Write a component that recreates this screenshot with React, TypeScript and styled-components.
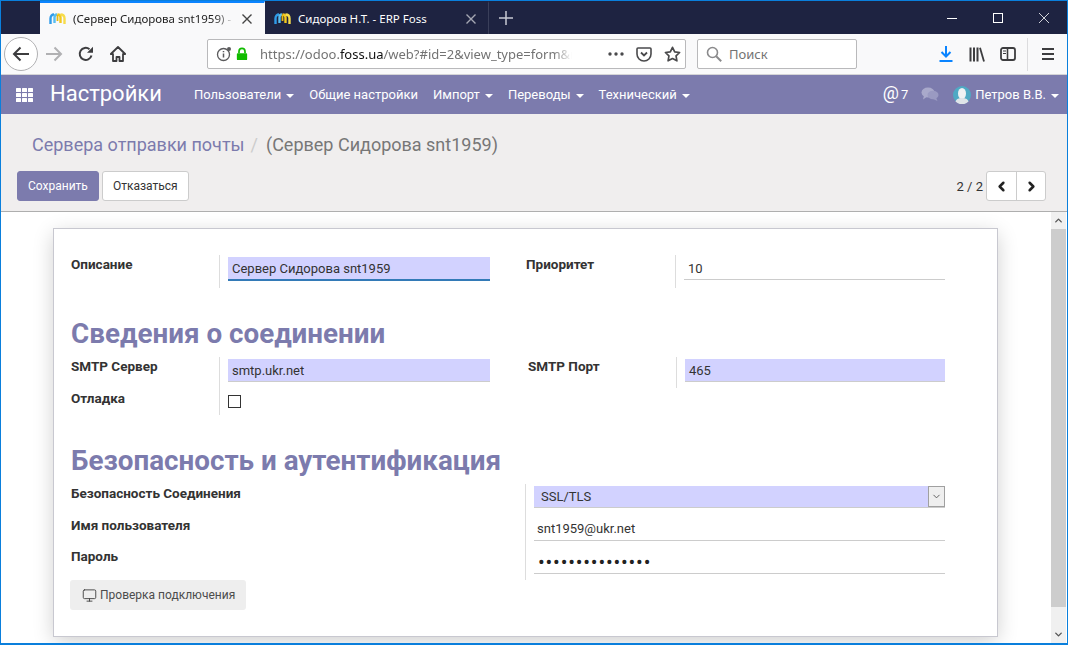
import * as React from 'react';
import styled, { createGlobalStyle } from 'styled-components';
import { ChevronDown, ChevronLeft, ChevronRight, ChevronUp, Monitor } from 'lucide-react';

const GlobalStyle = createGlobalStyle`
  html, body {
    margin: 0;
    height: 100%;
    overflow: hidden;
    background: #fff;
  }
  * {
    box-sizing: border-box;
  }
`;

const purple = '#7c7bad';
const uiFont = `"Noto Sans", "Open Sans", sans-serif`;
const odooFont = `Roboto, "Liberation Sans", sans-serif`;

const Window = styled.div`
  width: 1068px;
  height: 645px;
  display: flex;
  flex-direction: column;
  border: solid #0a7fdc;
  border-width: 1px 1px 2px 1px;
  overflow: hidden;
  font-family: ${odooFont};
`;

const TitleBar = styled.div`
  height: 33px;
  flex: none;
  display: flex;
  background: #1e2341;
  padding-left: 39px;
`;

const Tab = styled.div<{ $active?: boolean }>`
  width: ${(p) => (p.$active ? 225 : 224)}px;
  display: flex;
  align-items: center;
  gap: 7px;
  padding: 0 9px 0 9px;
  font: 11.5px ${uiFont};
  white-space: nowrap;
  overflow: hidden;
  color: ${(p) => (p.$active ? '#222' : '#fff')};
  background: ${(p) => (p.$active ? '#f9f9fa' : 'transparent')};
  border-top: 2px solid ${(p) => (p.$active ? '#0a84ff' : 'transparent')};
  border-right: 1px solid ${(p) => (p.$active ? 'transparent' : '#3a3f5a')};
`;

const TabTitle = styled.span<{ $active?: boolean }>`
  flex: 1;
  overflow: hidden;
  ${(p) =>
    p.$active &&
    `-webkit-mask-image: linear-gradient(90deg, #000 88%, transparent 100%);
     mask-image: linear-gradient(90deg, #000 88%, transparent 100%);`}
`;

const TabClose = styled.svg`
  width: 10px;
  height: 10px;
  flex: none;
  margin-right: 3px;
`;

const NewTab = styled.div`
  width: 34px;
  display: flex;
  align-items: center;
  justify-content: center;
`;

const WindowButtons = styled.div`
  margin-left: auto;
  display: flex;
`;

const WindowButton = styled.div`
  width: 46px;
  display: flex;
  align-items: center;
  justify-content: center;
`;

const Toolbar = styled.div`
  height: 41px;
  flex: none;
  display: flex;
  align-items: center;
  background: #f9f9fa;
  border-bottom: 1px solid #d4d4d6;
  padding-left: 3px;
`;

const BackButton = styled.div`
  width: 34px;
  height: 34px;
  flex: none;
  border-radius: 50%;
  border: 1px solid #b1b1b3;
  background: #fff;
  display: flex;
  align-items: center;
  justify-content: center;
`;

const ToolIcon = styled.div<{ $w?: number }>`
  width: ${(p) => p.$w ?? 32}px;
  height: 32px;
  flex: none;
  display: flex;
  align-items: center;
  justify-content: center;
`;

const Field = styled.div`
  height: 30px;
  flex: none;
  display: flex;
  align-items: center;
  background: #fff;
  border: 1px solid #b9b9bb;
  border-radius: 2px;
`;

const UrlBar = styled(Field)`
  width: 479px;
  margin-left: 73px;
  padding-left: 8px;
`;

const UrlText = styled.div`
  width: 312px;
  margin-left: 12px;
  font: 13px/28px ${uiFont};
  color: #737373;
  white-space: nowrap;
  overflow: hidden;
  -webkit-mask-image: linear-gradient(90deg, #000 94%, transparent 100%);
  mask-image: linear-gradient(90deg, #000 94%, transparent 100%);

  b {
    font-weight: 400;
    color: #111;
  }
`;

const UrlActions = styled.div`
  margin-left: auto;
  margin-right: -1px;
  display: flex;
`;

const SearchBar = styled(Field)`
  width: 160px;
  margin-left: 11px;
  padding-left: 8px;
  gap: 7px;
  font: 13px ${uiFont};
  color: #737373;
`;

const ToolbarEnd = styled.div`
  margin-left: auto;
  display: flex;
  align-items: center;
  padding-right: 3px;
`;

const ToolDivider = styled.div`
  width: 1px;
  height: 33px;
  background: #dcdcde;
  margin: 0 4px 0 3px;
`;

const NavBar = styled.div`
  height: 39px;
  flex: none;
  display: flex;
  align-items: center;
  background: ${purple};
  color: #fff;
  padding-left: 15px;
  font-size: 13px;
`;

const AppTitle = styled.div`
  font-size: 22px;
  margin: -3px 32px 0 16px;
`;

const MenuItem = styled.div`
  display: flex;
  align-items: center;
  gap: 5px;
  margin-right: 15px;
  white-space: nowrap;
`;

const Caret = styled.span`
  width: 0;
  height: 0;
  border-left: 4px solid transparent;
  border-right: 4px solid transparent;
  border-top: 4px solid #fff;
  margin-top: 2px;
`;

const NavRight = styled.div`
  margin-left: auto;
  display: flex;
  align-items: center;
  padding-right: 8px;
`;

const AtSign = styled.span`
  font-size: 18px;
  margin: -4px 2px 0 0;
`;

const ChatIcon = styled.svg`
  width: 18px;
  height: 15px;
  margin: 0 14px 0 13px;
`;

const Avatar = styled.svg`
  width: 18px;
  height: 18px;
  margin-right: 4px;
`;

const ControlPanel = styled.div`
  height: 98px;
  flex: none;
  background: #f0eeee;
  border-bottom: 1px solid #aeaeae;
  padding: 19px 21px 0 16px;
`;

const Breadcrumb = styled.div`
  font-size: 18px;
  line-height: 24px;
  padding-left: 15px;
  color: #777;
  white-space: nowrap;
`;

const BreadLink = styled.span`
  color: ${purple};
`;

const BreadSep = styled.span`
  color: #ccc;
  margin: 0 8px 0 6px;
`;

const PanelRow = styled.div`
  display: flex;
  align-items: center;
  margin-top: 14px;
`;

const ActionButton = styled.div<{ $primary?: boolean }>`
  height: 30px;
  display: flex;
  align-items: center;
  padding: 0 10px;
  margin-right: 3px;
  font-size: 12px;
  border-radius: 3px;
  border: 1px solid ${(p) => (p.$primary ? purple : '#ccc')};
  background: ${(p) => (p.$primary ? purple : '#fff')};
  color: ${(p) => (p.$primary ? '#fff' : '#333')};
`;

const Pager = styled.div`
  margin-left: auto;
  display: flex;
  align-items: center;
  font-size: 13px;
  color: #333;
`;

const PagerButtons = styled.div`
  display: flex;
  margin-left: 3px;
  height: 30px;
  background: #fff;
  border: 1px solid #ccc;
  border-radius: 3px;
`;

const PagerButton = styled.div`
  width: 29px;
  display: flex;
  align-items: center;
  justify-content: center;
  & + & {
    border-left: 1px solid #ccc;
  }
`;

const Body = styled.div`
  flex: 1;
  min-height: 0;
  display: flex;
  background: #fff;
`;

const Main = styled.div`
  flex: 1;
  padding: 16px 0 0 52px;
  min-width: 0;
`;

const Scrollbar = styled.div`
  width: 15px;
  flex: none;
  display: flex;
  flex-direction: column;
  background: #f0f0f0;
  margin-right: 1px;
`;

const ScrollArrow = styled.div`
  height: 17px;
  display: flex;
  align-items: center;
  justify-content: center;
`;

const ScrollThumb = styled.div`
  flex: 1;
  background: #cdcdcd;
  margin-bottom: 19px;
`;

const Sheet = styled.div`
  width: 945px;
  height: 409px;
  background: #fff;
  border: 1px solid #c8c8d0;
  box-shadow: 0 5px 20px -1px rgba(0, 0, 0, 0.2);
  padding: 26px 0 0 17px;
  color: #4c4c4c;
  font-size: 13px;
`;

const Columns = styled.div`
  display: grid;
  grid-template-columns: 419px 419px;
  column-gap: 36px;
`;

const FieldGrid = styled.div<{ $label?: number }>`
  display: grid;
  grid-template-columns: ${(p) => p.$label ?? 148}px 1fr;
`;

const Label = styled.div<{ $offset?: number; $indent?: number }>`
  font-weight: 700;
  color: #333;
  font-size: 13.5px;
  line-height: 18px;
  padding-top: ${(p) => p.$offset ?? 0}px;
  padding-left: ${(p) => p.$indent ?? 0}px;
  white-space: nowrap;
`;

const Cell = styled.div<{ $h?: number }>`
  border-left: 1px solid #ddd;
  padding-left: 8px;
  ${(p) => (p.$h ? `height: ${p.$h}px;` : '')}
`;

const Input = styled.div<{ $required?: boolean; $focus?: boolean }>`
  height: ${(p) => (p.$focus ? 24 : 23)}px;
  line-height: 21px;
  padding: 1px 0 0 4px;
  margin-top: 2px;
  color: #333;
  background: ${(p) => (p.$required ? '#d2d2ff' : 'transparent')};
  border-bottom: ${(p) => (p.$focus ? '2px solid #337ab7' : '1px solid #ccc')};
`;

const SectionTitle = styled.div<{ $top: number }>`
  margin-top: ${(p) => p.$top}px;
  height: 29px;
  font-size: 27.8px;
  line-height: 29px;
  font-weight: 700;
  color: ${purple};
  white-space: nowrap;
`;

const SectionFields = styled.div<{ $top: number }>`
  margin-top: ${(p) => p.$top}px;
`;

const CheckBox = styled.div`
  width: 13px;
  height: 13px;
  margin-top: 7px;
  border: 1px solid #333;
  background: #fff;
`;

const SecurityGrid = styled.div`
  display: grid;
  grid-template-columns: 454px 420px;
`;

const SecurityLabels = styled.div`
  display: grid;
  grid-auto-rows: 31.5px;
`;

const SecurityCell = styled(Cell)`
  height: 96px;
  padding-top: 2px;
`;

const Select = styled.div`
  height: 22px;
  display: flex;
  align-items: center;
  padding-left: 7px;
  background: #d2d2ff;
  border-bottom: 1px solid #ccc;
  color: #333;
`;

const SelectArrow = styled.div`
  margin-left: auto;
  width: 17px;
  height: 21px;
  display: flex;
  align-items: center;
  justify-content: center;
  background: #efefef;
  border: 1px solid #a0a0a0;
`;

const UserInput = styled(Input)`
  margin-top: 10px;
  height: 23px;
  padding: 0 0 0 3px;
`;

const PasswordInput = styled(Input)`
  margin-top: 10px;
  height: 23px;
  padding-left: 4px;
  font-size: 20px;
  letter-spacing: 0.8px;
  color: #222;
`;

const TestButton = styled.div`
  width: 176px;
  height: 30px;
  margin-left: -1px;
  display: flex;
  align-items: center;
  gap: 3px;
  padding-left: 12px;
  background: #eee;
  border-radius: 3px;
  color: #4c4c4c;
  font-size: 12px;
  white-space: nowrap;
`;

const FossLogo = () => (
  <svg width="17" height="16" viewBox="0 0 17 16" style={{ flex: 'none' }}>
    <g fill="none" strokeWidth="2.400">
      <path d="M1.500 13V7.500C1.500 5 3 3.500 5 3.500" stroke="#2f9be8" />
      <path d="M5.500 12V6.500C5.500 4.500 6.500 3.500 8 3.500" stroke="#58bdf0" />
      <path d="M8.500 3.500C10.500 3.500 11.500 4.500 11.500 6.500V12" stroke="#f2c81e" />
      <path d="M11.500 3.500C14 3.500 15.500 5 15.500 7.500V13" stroke="#f7dc4a" />
      <path d="M8.500 3.500V10" stroke="#e8b810" strokeWidth="1.800" />
    </g>
  </svg>
);

const CloseGlyph = ({ color }: { color: string }) => (
  <TabClose viewBox="0 0 10 10">
    <path d="M0.500 0.500l9 9M9.500 0.500l-9 9" stroke={color} strokeWidth="1.400" fill="none" />
  </TabClose>
);

export default function App() {
  return (
    <Window>
      <GlobalStyle />
      <TitleBar>
        <Tab $active>
          <FossLogo />
          <TabTitle $active>(Сервер Сидорова snt1959) - ERP Foss</TabTitle>
          <CloseGlyph color="#444" />
        </Tab>
        <Tab>
          <FossLogo />
          <TabTitle>Сидоров Н.Т. - ERP Foss</TabTitle>
          <CloseGlyph color="#a5a7b3" />
        </Tab>
        <NewTab>
          <svg width="14" height="14" viewBox="0 0 14 14">
            <path d="M7 0v14M0 7h14" stroke="#c8c9d2" strokeWidth="1.500" />
          </svg>
        </NewTab>
        <WindowButtons>
          <WindowButton>
            <svg width="10" height="10" viewBox="0 0 10 10">
              <path d="M0 5.500h10" stroke="#fff" />
            </svg>
          </WindowButton>
          <WindowButton>
            <svg width="10" height="10" viewBox="0 0 10 10">
              <rect x="0.500" y="0.500" width="9" height="9" fill="none" stroke="#fff" />
            </svg>
          </WindowButton>
          <WindowButton>
            <svg width="10" height="10" viewBox="0 0 10 10">
              <path d="M0 0l10 10M10 0L0 10" stroke="#fff" strokeWidth="0.800" />
            </svg>
          </WindowButton>
        </WindowButtons>
      </TitleBar>

      <Toolbar>
        <BackButton>
          <svg width="18" height="16" viewBox="0 0 18 16">
            <path d="M17 8H2M8.500 1.500L2 8l6.500 6.500" fill="none" stroke="#3d3d3f" strokeWidth="2" />
          </svg>
        </BackButton>
        <ToolIcon>
          <svg width="18" height="16" viewBox="0 0 18 16">
            <path d="M1 8h15M9.500 1.500L16 8l-6.500 6.500" fill="none" stroke="#b1b1b3" strokeWidth="2" />
          </svg>
        </ToolIcon>
        <ToolIcon>
          <svg width="16" height="16" viewBox="0 0 16 16">
            <path d="M13.500 9.500A6 6 0 1 1 11.500 3.200" fill="none" stroke="#3d3d3f" strokeWidth="2" />
            <path d="M15 0.800v6h-6z" fill="#3d3d3f" />
          </svg>
        </ToolIcon>
        <ToolIcon>
          <svg width="16" height="16" viewBox="0 0 16 16">
            <path d="M8 1L0.800 8h2.200v7h3.500v-4h3v4H13V8h2.200z" fill="none" stroke="#3d3d3f" strokeWidth="1.800" strokeLinejoin="round" />
          </svg>
        </ToolIcon>
        <UrlBar>
          <svg width="16" height="16" viewBox="0 0 16 16">
            <circle cx="7.500" cy="8.500" r="6" fill="none" stroke="#5a5a5c" strokeWidth="1.300" />
            <path d="M7.500 7.500v4M7.500 5v1.300" stroke="#5a5a5c" strokeWidth="1.500" />
            <circle cx="13" cy="3" r="2" fill="#5a5a5c" />
          </svg>
          <svg width="12" height="14" viewBox="0 0 14 16" style={{ marginLeft: 4 }}>
            <path d="M3.500 7V5a3.500 3.500 0 0 1 7 0v2" fill="none" stroke="#12bc00" strokeWidth="2" />
            <rect x="1" y="7" width="12" height="8" rx="1" fill="#12bc00" />
          </svg>
          <UrlText>
            https://odoo.<b>foss.ua</b>/web?#id=2&amp;view_type=form&amp;model=ir
          </UrlText>
          <UrlActions>
            <ToolIcon $w={28}>
              <svg width="16" height="4" viewBox="0 0 16 4">
                <circle cx="2" cy="2" r="1.700" fill="#4a4a4c" />
                <circle cx="8" cy="2" r="1.700" fill="#4a4a4c" />
                <circle cx="14" cy="2" r="1.700" fill="#4a4a4c" />
              </svg>
            </ToolIcon>
            <ToolIcon $w={28}>
              <svg width="16" height="15" viewBox="0 0 16 15">
                <path d="M2 1h12a1 1 0 0 1 1 1v5a7 7 0 0 1-14 0V2a1 1 0 0 1 1-1z" fill="none" stroke="#4a4a4c" strokeWidth="1.600" />
                <path d="M5 5.500l3 3 3-3" fill="none" stroke="#4a4a4c" strokeWidth="1.800" />
              </svg>
            </ToolIcon>
            <ToolIcon $w={28}>
              <svg width="17" height="16" viewBox="0 0 17 16">
                <path d="M8.500 1.300l2.200 4.500 4.900.7-3.550 3.450.85 4.900-4.400-2.300-4.400 2.300.85-4.900L1.400 6.500l4.900-.7z" fill="none" stroke="#4a4a4c" strokeWidth="1.700" strokeLinejoin="round" />
              </svg>
            </ToolIcon>
          </UrlActions>
        </UrlBar>
        <SearchBar>
          <svg width="16" height="16" viewBox="0 0 16 16">
            <circle cx="6.500" cy="6.500" r="5" fill="none" stroke="#8a8a8c" strokeWidth="1.600" />
            <path d="M10.200 10.200l5 5" stroke="#8a8a8c" strokeWidth="2" />
          </svg>
          Поиск
        </SearchBar>
        <ToolbarEnd>
          <ToolIcon>
            <svg width="14" height="16" viewBox="0 0 14 16">
              <path d="M7 0v10M2.500 6L7 10.500 11.500 6" fill="none" stroke="#0a84ff" strokeWidth="2" />
              <path d="M0.500 15h13" stroke="#0a84ff" strokeWidth="2" />
            </svg>
          </ToolIcon>
          <ToolIcon $w={30}>
            <svg width="16" height="15" viewBox="0 0 16 15">
              <path d="M1.500 0.500v14M5 0.500v14M8.500 0.500v14" stroke="#3d3d3f" strokeWidth="2" />
              <path d="M11 0.800l4 13.800" stroke="#3d3d3f" strokeWidth="1.800" />
            </svg>
          </ToolIcon>
          <ToolIcon>
            <svg width="16" height="14" viewBox="0 0 16 14">
              <rect x="1" y="1" width="14" height="12" rx="2" fill="none" stroke="#3d3d3f" strokeWidth="1.800" />
              <path d="M7.500 1v12" stroke="#3d3d3f" strokeWidth="1.600" />
              <path d="M3 4h3M3 6.500h3" stroke="#3d3d3f" />
            </svg>
          </ToolIcon>
          <ToolDivider />
          <ToolIcon>
            <svg width="14" height="12" viewBox="0 0 14 12">
              <path d="M1 1h12M1 6h12M1 11h12" stroke="#3d3d3f" strokeWidth="1.800" />
            </svg>
          </ToolIcon>
        </ToolbarEnd>
      </Toolbar>

      <NavBar>
        <svg width="18" height="14" viewBox="0 0 18 14">
          {[0, 5, 10].map((y) =>
            [0, 6, 12].map((x) => <rect key={`${x}-${y}`} x={x} y={y} width="5" height="4" rx="0.500" fill="#fff" />),
          )}
        </svg>
        <AppTitle>Настройки</AppTitle>
        <MenuItem>
          Пользователи <Caret />
        </MenuItem>
        <MenuItem>Общие настройки</MenuItem>
        <MenuItem>
          Импорт <Caret />
        </MenuItem>
        <MenuItem>
          Переводы <Caret />
        </MenuItem>
        <MenuItem>
          Технический <Caret />
        </MenuItem>
        <NavRight>
          <AtSign>@</AtSign>7
          <ChatIcon viewBox="0 0 18 15">
            <ellipse cx="7" cy="5.500" rx="6.500" ry="5" fill="#a9a9cb" />
            <path d="M3 8.500l-1 4 4.500-3z" fill="#a9a9cb" />
            <ellipse cx="12" cy="8" rx="5.500" ry="4.200" fill="#9a9ac2" />
            <path d="M15 10.500l1.500 3.500-4.500-2z" fill="#9a9ac2" />
          </ChatIcon>
          <Avatar viewBox="0 0 18 18">
            <circle cx="9" cy="9" r="9" fill="#4fa9c4" />
            <ellipse cx="9" cy="7.500" rx="4" ry="5.500" fill="#eef1f3" />
            <path d="M2.500 15.500c1-3 4-3.500 6.500-3.500s5.500.5 6.500 3.500A9 9 0 0 1 2.500 15.500z" fill="#dfe4e8" />
          </Avatar>
          <MenuItem style={{ marginRight: 0 }}>
            Петров В.В. <Caret />
          </MenuItem>
        </NavRight>
      </NavBar>

      <ControlPanel>
        <Breadcrumb>
          <BreadLink>Сервера отправки почты</BreadLink>
          <BreadSep>/</BreadSep>
          (Сервер Сидорова snt1959)
        </Breadcrumb>
        <PanelRow>
          <ActionButton $primary>Сохранить</ActionButton>
          <ActionButton>Отказаться</ActionButton>
          <Pager>
            2 / 2
            <PagerButtons>
              <PagerButton>
                <ChevronLeft size={15} strokeWidth={4} color="#222" />
              </PagerButton>
              <PagerButton>
                <ChevronRight size={15} strokeWidth={4} color="#222" />
              </PagerButton>
            </PagerButtons>
          </Pager>
        </PanelRow>
      </ControlPanel>

      <Body>
        <Main>
          <Sheet>
            <Columns>
              <FieldGrid>
                <Label>Описание</Label>
                <Cell $h={33}>
                  <Input $required $focus>
                    Сервер Сидорова snt1959
                  </Input>
                </Cell>
              </FieldGrid>
              <FieldGrid $label={149}>
                <Label>Приоритет</Label>
                <Cell $h={33}>
                  <Input>10</Input>
                </Cell>
              </FieldGrid>
            </Columns>

            <SectionTitle $top={31}>Сведения о соединении</SectionTitle>

            <SectionFields $top={9}>
              <Columns>
                <FieldGrid>
                  <Label>SMTP Сервер</Label>
                  <Cell $h={31}>
                    <Input $required>smtp.ukr.net</Input>
                  </Cell>
                  <Label $offset={1}>Отладка</Label>
                  <Cell $h={27}>
                    <CheckBox />
                  </Cell>
                </FieldGrid>
                <FieldGrid $label={150}>
                  <Label $indent={2}>SMTP Порт</Label>
                  <Cell $h={31}>
                    <Input $required>465</Input>
                  </Cell>
                </FieldGrid>
              </Columns>
            </SectionFields>

            <SectionTitle $top={31}>Безопасность и аутентификация</SectionTitle>

            <SectionFields $top={9}>
              <SecurityGrid>
                <SecurityLabels>
                  <Label>Безопасность Соединения</Label>
                  <Label>Имя пользователя</Label>
                  <Label>Пароль</Label>
                </SecurityLabels>
                <SecurityCell>
                  <Select>
                    SSL/TLS
                    <SelectArrow>
                      <ChevronDown size={11} color="#555" />
                    </SelectArrow>
                  </Select>
                  <UserInput>snt1959@ukr.net</UserInput>
                  <PasswordInput>•••••••••••••••</PasswordInput>
                </SecurityCell>
              </SecurityGrid>
            </SectionFields>
            <TestButton>
              <Monitor size={15} strokeWidth={1.500} color="#444" />
              Проверка подключения
            </TestButton>
          </Sheet>
        </Main>
        <Scrollbar>
          <ScrollArrow>
            <ChevronUp size={11} strokeWidth={3} color="#555" />
          </ScrollArrow>
          <ScrollThumb />
          <ScrollArrow>
            <ChevronDown size={11} strokeWidth={3} color="#555" />
          </ScrollArrow>
        </Scrollbar>
      </Body>
    </Window>
  );
}
